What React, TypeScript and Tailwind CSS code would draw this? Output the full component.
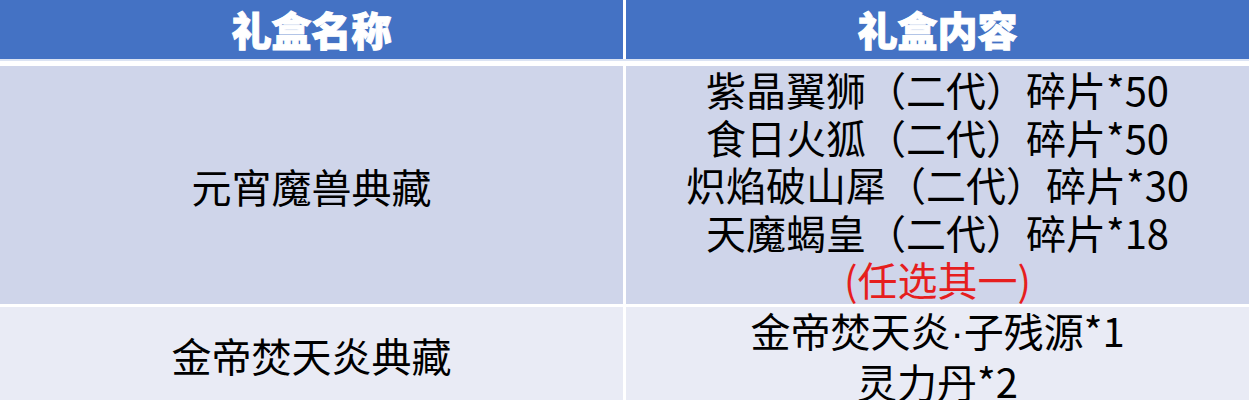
import React from "react";

const font = { fontFamily: '"Noto Sans CJK SC", "Noto Sans", sans-serif' };

export default function App() {
  return (
    <div className="w-[1249px] h-[400px] overflow-hidden bg-white" style={font}>
      <div className="flex h-[59px] bg-[#4472c4] text-white font-black text-[40px] leading-none [-webkit-text-stroke:1px_white]">
        <div className="w-[623px] flex items-center justify-center pb-[1px]">礼盒名称</div>
        <div className="w-[3px] bg-white" />
        <div className="flex-1 flex items-center justify-center pb-[1px]">礼盒内容</div>
      </div>
      <div className="h-[2px] bg-[#dbe3f3]" />
      <div className="h-[5px] bg-white" />
      <div className="flex h-[238px] bg-[#cfd5ea] text-black text-[40px]">
        <div className="w-[623px] flex items-center justify-center pt-[1px]">元宵魔兽典藏</div>
        <div className="w-[3px] bg-white" />
        <div className="flex-1 flex flex-col items-center leading-[47.6px]">
          <div>紫晶翼狮（二代）碎片*50</div>
          <div>食日火狐（二代）碎片*50</div>
          <div>炽焰破山犀（二代）碎片*30</div>
          <div>天魔蝎皇（二代）碎片*18</div>
          <div className="text-[#e61e1e]">(任选其一)</div>
        </div>
      </div>
      <div className="h-[3px] bg-white" />
      <div className="flex h-[96px] bg-[#e9ebf5] text-black text-[40px]">
        <div className="w-[623px] flex items-center justify-center">金帝焚天炎典藏</div>
        <div className="w-[3px] bg-white" />
        <div className="flex-1 flex flex-col items-center leading-[47.6px]">
          <div>
            金帝焚天炎<span style={{ fontFamily: '"Liberation Sans", sans-serif' }}>·</span>子残源*1
          </div>
          <div>灵力丹*2</div>
        </div>
      </div>
    </div>
  );
}
